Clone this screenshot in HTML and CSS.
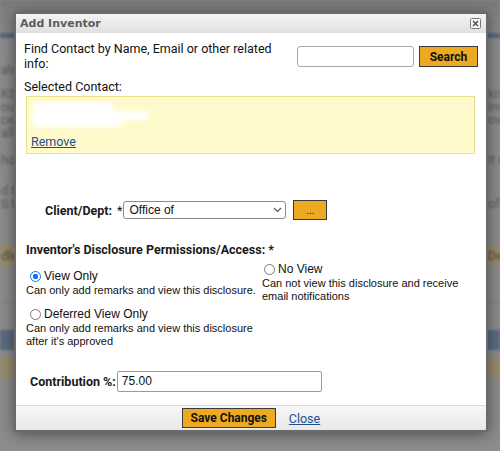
FILE: index.html
```html
<!DOCTYPE html>
<html>
<head>
<meta charset="utf-8">
<link rel="stylesheet" href="styles.css">
</head>
<body>
<div class="bg">
  <div class="bg-top"></div>
  <div class="bg-strip"></div>
  <div class="bg-row row-als"><span class="l">als</span><span class="r"></span></div>
  <div class="bg-row row-ksu"><span class="l">KSU</span><span class="r">kno</span></div>
  <div class="bg-row"><span class="l">our</span><span class="r">ino</span></div>
  <div class="bg-row"><span class="l">cen</span><span class="r">ow</span></div>
  <div class="bg-row"><span class="l">ally</span><span class="r"></span></div>
  <div class="bg-row row-hor"><span class="l">hor</span><span class="r">it n</span></div>
  <div class="bg-row row-dn"><span class="l">d N</span><span class="r"></span></div>
  <div class="bg-row"><span class="l">S M</span><span class="r">of</span></div>
  <div class="bg-bar tan row-dle"><span class="l">dle</span><span class="r">De</span></div>
  <div class="bg-line"></div>
  <div class="bg-bar blue"></div>
  <div class="bg-bar tan row-last"></div>
</div>

<div class="dialog">
  <div class="titlebar">
    <span class="title">Add Inventor</span>
    <span class="close-x">
      <svg width="11" height="11" viewBox="0 0 11 11"><rect x="0.5" y="0.5" width="10" height="10" rx="1" fill="#f5f5f5" stroke="#7a7a7a"/><path d="M3 3L8 8M8 3L3 8" stroke="#4a4a4a" stroke-width="1.3"/></svg>
    </span>
  </div>

  <div class="content">
    <div class="find-row">
      <div class="find-label">Find Contact by Name, Email or other related info:</div>
      <input class="search-input" type="text">
      <button class="btn btn-search">Search</button>
    </div>

    <div class="sel-label">Selected Contact:</div>
    <div class="contact-box">
      <div class="redacted"><span class="b1"></span><span class="b2"></span><span class="b3"></span></div>
      <a class="link" href="#">Remove</a>
    </div>

    <div class="client-row">
      <span class="lbl">Client/Dept:</span>
      <span class="req">*</span>
      <div class="select">
        <span class="sel-text">Office of</span>
        <svg class="chev" width="9" height="6" viewBox="0 0 9 6"><path d="M1 1L4.5 4.5L8 1" fill="none" stroke="#555" stroke-width="1.1"/></svg>
      </div>
      <button class="btn btn-dots">...</button>
    </div>

    <div class="perm-head">Inventor's Disclosure Permissions/Access: *</div>

    <div class="perm-grid">
      <div class="opt">
        <label class="opt-label"><span class="radio on"></span>View Only</label>
        <div class="desc">Can only add remarks and view this disclosure.</div>
      </div>
      <div class="opt opt-right">
        <label class="opt-label"><span class="radio"></span>No View</label>
        <div class="desc">Can not view this disclosure and receive<br>email notifications</div>
      </div>
      <div class="opt">
        <label class="opt-label"><span class="radio"></span>Deferred View Only</label>
        <div class="desc">Can only add remarks and view this disclosure<br>after it's approved</div>
      </div>
    </div>

    <div class="contrib-row">
      <span class="lbl">Contribution %:</span>
      <div class="contrib-input">75.00</div>
    </div>
  </div>

  <div class="footer">
    <button class="btn btn-save">Save Changes</button>
    <a class="link" href="#">Close</a>
  </div>
</div>
</body>
</html>
```

FILE: styles.css
```css
* { box-sizing: border-box; }
html, body { margin: 0; padding: 0; }
body {
  width: 500px;
  height: 451px;
  overflow: hidden;
  position: relative;
  background: #8c8c8c;
  font-family: Roboto, "Liberation Sans", sans-serif;
  font-size: 12.5px;
  color: #111;
}

/* dimmed page behind the modal */
.bg { height: 451px; filter: blur(1px); color: #5c5c5c; font-size: 12.5px; }
.bg-top { height: 33px; background: linear-gradient(#7a7a7a, #898989); }
.bg-strip { height: 5px; background: #5a6880; }
.bg-row {
  display: flex;
  justify-content: space-between;
  height: 13px;
  line-height: 13px;
  white-space: nowrap;
}
.bg-row .l, .bg-bar .l { padding-left: 1px; }
.bg-row .r, .bg-bar .r { width: 12px; overflow: hidden; }
.row-als { margin-top: 25px; }
.row-ksu { margin-top: 11px; }
.row-hor { margin-top: 14px; }
.row-dn { margin-top: 18px; }
.bg-bar {
  height: 20px;
  display: flex;
  justify-content: space-between;
  align-items: center;
  white-space: nowrap;
  color: #504a3c;
}
.bg-bar.tan { background: #9a8b6c; }
.bg-bar.blue { background: #5b6a80; margin-top: 27px; }
.row-dle { margin-top: 35px; }
.row-last { margin-top: 8px; }
.bg-line { height: 1px; background: #7d7d7d; margin-top: 37px; }

/* dialog */
.dialog {
  position: absolute;
  left: 14px;
  top: 12px;
  width: 474px;
  height: 420px;
  border: 2px solid #6a6a6a;
  background: #fff;
  display: flex;
  flex-direction: column;
  box-shadow: 0 2px 14px rgba(0, 0, 0, 0.45);
}
.titlebar {
  flex: none;
  height: 19px;
  display: flex;
  align-items: center;
  justify-content: space-between;
  padding: 0 5px 0 4px;
  background: linear-gradient(#f3f3f3, #e0e0e0);
}
.title {
  font-family: "DejaVu Sans", sans-serif;
  font-weight: bold;
  font-size: 11px;
  color: #5b5b5b;
}
.close-x { display: flex; }

.content { flex: 1; padding: 8px 8px 0 8px; }

.find-row { display: flex; align-items: flex-start; }
.find-label { width: 255px; line-height: 15px; }
.search-input {
  margin-left: auto;
  margin-top: 5px;
  width: 117px;
  height: 21px;
  border: 1px solid #a9a9a9;
  border-radius: 3px;
  background: #fff;
  padding: 0;
}
.btn {
  font-family: Roboto, "Liberation Sans", sans-serif;
  font-weight: bold;
  font-size: 12px;
  color: #111;
  background: #eea922;
  border: 1px solid #3a3a3a;
  border-radius: 0;
  padding: 0;
}
.btn-search { margin-left: 5px; margin-top: 5px; width: 59px; height: 21px; }

.sel-label { margin-top: 8px; line-height: 15px; }
.contact-box {
  margin: 2px 3px 0 2px;
  height: 58px;
  border: 1px solid #ebe08c;
  background: #fffacb;
  padding: 3px 4px;
}
.redacted { height: 34px; position: relative; filter: blur(2px); }
.redacted span { position: absolute; background: #fff; border-radius: 4px; }
.redacted .b1 { left: 2px; top: 2px; width: 80px; height: 10px; }
.redacted .b2 { left: 0; top: 11px; width: 118px; height: 9px; }
.redacted .b3 { left: 2px; top: 19px; width: 90px; height: 8px; }

.link {
  color: #1d4f91;
  text-decoration: underline;
  font-size: 12.5px;
  line-height: 15px;
}

.client-row {
  margin-top: 46px;
  display: flex;
  align-items: center;
  height: 20px;
  padding-left: 21px;
}
.lbl { font-weight: bold; font-size: 12.5px; color: #1a1a1a; }
.req { margin-left: 5px; font-size: 12.5px; }
.select {
  margin-left: 1px;
  width: 163px;
  height: 18px;
  border: 1px solid #8a8a8a;
  border-radius: 3px;
  display: flex;
  align-items: center;
  justify-content: space-between;
  padding: 0 3px 0 5px;
  font-family: "Liberation Sans", Arial, sans-serif;
  font-size: 12px;
}
.chev { display: block; }
.btn-dots { margin-left: 7px; width: 34px; height: 20px; font-size: 10px; font-weight: normal; }

.perm-head {
  margin-top: 22px;
  margin-left: 2px;
  font-weight: bold;
  font-size: 12.5px;
  line-height: 15px;
  color: #1a1a1a;
}

.perm-grid {
  margin-top: 5px;
  margin-left: 2px;
  display: grid;
  grid-template-columns: 236px 1fr;
  align-items: center;
  row-gap: 4px;
  font-family: "Liberation Sans", Arial, sans-serif;
}
.opt-label {
  display: flex;
  align-items: center;
  font-size: 12px;
  line-height: 15px;
}
.radio {
  width: 11px;
  height: 11px;
  border-radius: 50%;
  border: 1px solid #7a7a7a;
  background: #fff;
  margin: 0 3px 0 4px;
  flex: none;
}
.radio.on {
  border: 1.5px solid #1a73e8;
  background: radial-gradient(circle, #1a73e8 0 2.6px, #fff 3px);
}
.opt-right .radio { margin-left: 2px; }
.desc { font-size: 11px; line-height: 13px; }

.contrib-row {
  margin-top: 23px;
  display: flex;
  align-items: center;
  padding-left: 6px;
}
.contrib-input {
  margin-left: 1px;
  width: 205px;
  height: 21px;
  border: 1px solid #9a9a9a;
  border-radius: 2px;
  padding-left: 4px;
  line-height: 19px;
  font-family: "Liberation Sans", Arial, sans-serif;
  font-size: 12px;
}

.footer {
  flex: none;
  height: 25px;
  border-top: 1px solid #dadada;
  background: linear-gradient(#f7f7f7, #e8e8e8);
  display: flex;
  align-items: center;
  justify-content: center;
  gap: 13px;
}
.btn-save { width: 94px; height: 20px; }
```
